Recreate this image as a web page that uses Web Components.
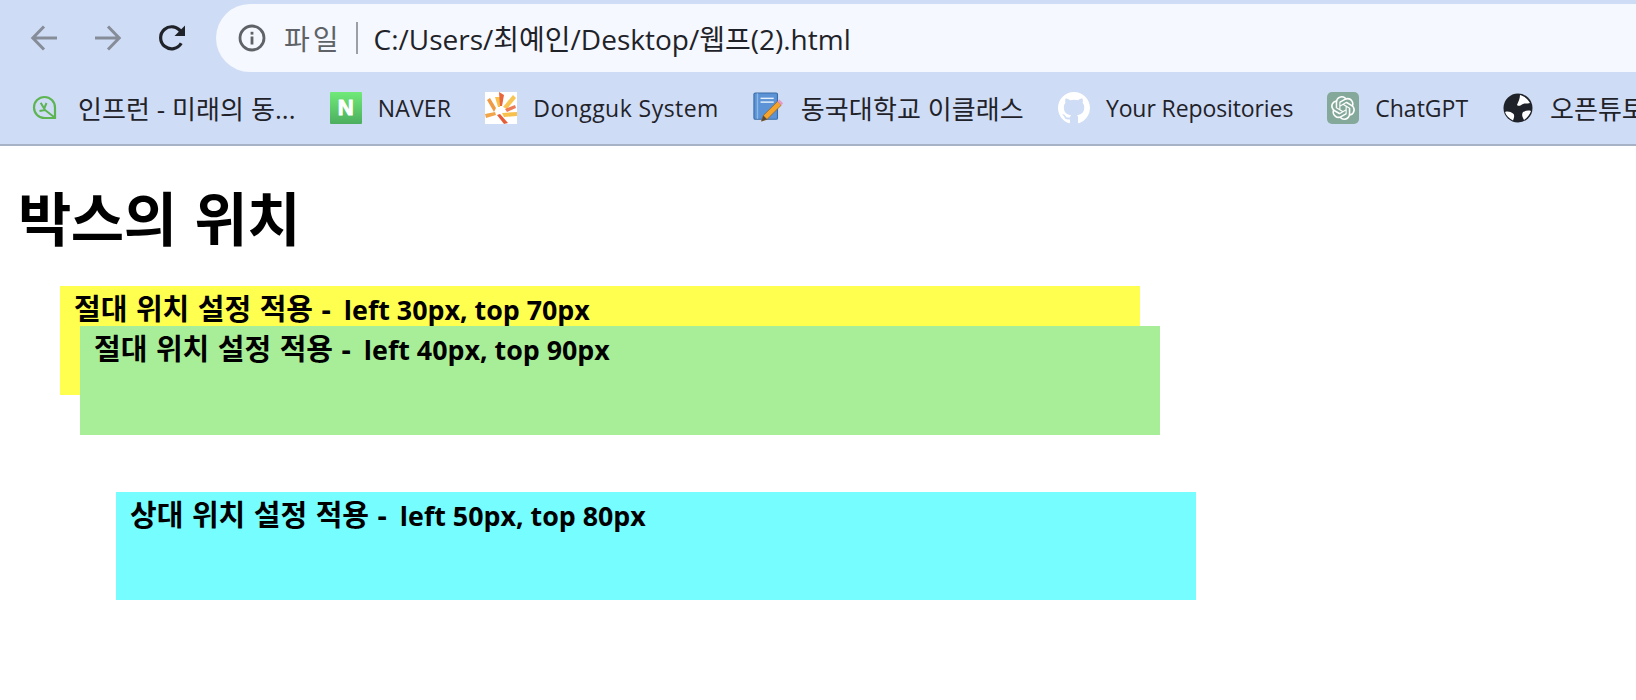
<!DOCTYPE html>
<html lang="ko">
<head>
<meta charset="utf-8">
<title>박스의 위치</title>
<style>
  html, body { margin: 0; padding: 0; background: #fff; overflow: hidden; }
  body { width: 1636px; height: 700px; font-family: "Noto Sans CJK KR", "Open Sans", sans-serif; }
</style>
</head>
<body>
<browser-chrome>
  <nav-button slot="nav" kind="back"></nav-button>
  <nav-button slot="nav" kind="forward"></nav-button>
  <nav-button slot="nav" kind="reload"></nav-button>
  <omni-box slot="nav" url="C:/Users/최예인/Desktop/웹프(2).html"></omni-box>

  <bookmark-item slot="bookmarks" icon="leaf" lang="ko" track="0.08" label="인프런 - 미래의 동..."></bookmark-item>
  <bookmark-item slot="bookmarks" icon="naver" track="0.2" label="NAVER"></bookmark-item>
  <bookmark-item slot="bookmarks" icon="dongguk" track="0.45" label="Dongguk System"></bookmark-item>
  <bookmark-item slot="bookmarks" icon="book" lang="ko" track="0.1" label="동국대학교 이클래스"></bookmark-item>
  <bookmark-item slot="bookmarks" icon="github" track="-0.1" label="Your Repositories"></bookmark-item>
  <bookmark-item slot="bookmarks" icon="chatgpt" label="ChatGPT"></bookmark-item>
  <bookmark-item slot="bookmarks" icon="globe" lang="ko" label="오픈튜토"></bookmark-item>
</browser-chrome>

<demo-page>
  <h1 slot="title">박스의 위치</h1>
  <demo-box color="#ffff50" indent="60"><span>절대 위치 설정 적용 -</span> left 30px, top 70px</demo-box>
  <demo-box color="#a8ee98" indent="80" overlap="69"><span>절대 위치 설정 적용 -</span> left 40px, top 90px</demo-box>
  <demo-box color="#75fdff" indent="116" gap="57" height="108"><span>상대 위치 설정 적용 -</span> left 50px, top 80px</demo-box>
</demo-page>

<script>
const UI_FONT = `"Open Sans", "Noto Sans CJK KR", sans-serif`;

const NAV_ICONS = {
  back: `<path d="M27 14H3M14 2.5 2.8 14 14 25.5" fill="none" stroke="#868d99" stroke-width="3"/>`,
  forward: `<path d="M1 14h24M14 2.5 25.2 14 14 25.5" fill="none" stroke="#868d99" stroke-width="3"/>`,
  reload: `<path d="M23.2 19.2A11 11 0 1 1 23 8" fill="none" stroke="#1f2329" stroke-width="3.2"/><path d="M27 1.5V12H16.5z" fill="#1f2329"/>`,
};

const BOOKMARK_ICONS = {
  leaf: `<svg viewBox="0 0 32 32" width="32" height="32"><path d="M25 26H14.5A10.5 10.5 0 1 1 25 15.5z" fill="none" stroke="#5cb552" stroke-width="2.2"/><path d="M24 25 15 18M15 18 10.7 10.7M15 18 9.5 19M14 17 16.5 11" fill="none" stroke="#5cb552" stroke-width="2"/></svg>`,
  dongguk: `<svg viewBox="0 0 32 32" width="32" height="32"><rect width="32" height="32" fill="#fff"/><path d="M2 8l3-2 6 10-2 4z" fill="#ee9a47"/><path d="M0 22l10-2 1 3-10 3z" fill="#f2a548"/><path d="M10 5h5v10h-2z" fill="#f8c14d"/><path d="M14 0l5 3-2 11h-2z" fill="#e9653b"/><path d="M18 15 28 3l3 3-9 11z" fill="#f9c552"/><path d="M20 17l10-4 1 3-9 4z" fill="#e9653b" opacity=".85"/><path d="M17 21l15-1v4l-13 1z" fill="#f8c14d"/><path d="M12 23l3-1 8 9-4 1z" fill="#e55c38"/></svg>`,
  book: `<svg viewBox="0 0 34 34" width="32" height="32"><rect x="1" y="1" width="25" height="28" rx="1.5" fill="#5b93d6" stroke="#3a6ca8" stroke-width="1.2"/><rect x="4" y="1.5" width="1.5" height="27" fill="#8db7e6"/><rect x="8" y="6" width="14" height="1.5" fill="#e8f1fb"/><rect x="8" y="10" width="14" height="1.5" fill="#e8f1fb"/><path d="M9 31l2-6L26 10l4 4L15 29z" fill="#f4a32c" stroke="#8a5a1e" stroke-width=".7"/><path d="M26 10l2-2 4 4-2 2z" fill="#e59ac8"/><path d="M9 31l2-6 4 4z" fill="#5a4a3c"/></svg>`,
  github: `<svg viewBox="0 0 16 16" width="32" height="32"><path fill="#fff" d="M8 0C3.58 0 0 3.58 0 8c0 3.54 2.29 6.53 5.47 7.59.4.07.55-.17.55-.38 0-.19-.01-.82-.01-1.49-2.01.37-2.53-.49-2.69-.94-.09-.23-.48-.94-.82-1.13-.28-.15-.68-.52-.01-.53.63-.01 1.08.58 1.23.82.72 1.21 1.87.87 2.33.66.07-.52.28-.87.51-1.07-1.78-.2-3.64-.89-3.64-3.95 0-.87.31-1.59.82-2.15-.08-.2-.36-1.02.08-2.12 0 0 .67-.21 2.2.82.64-.18 1.32-.27 2-.27.68 0 1.36.09 2 .27 1.53-1.04 2.2-.82 2.2-.82.44 1.1.16 1.92.08 2.12.51.56.82 1.27.82 2.15 0 3.07-1.87 3.75-3.65 3.95.29.25.54.73.54 1.48 0 1.07-.01 1.93-.01 2.2 0 .21.15.46.55.38A8.013 8.013 0 0016 8c0-4.42-3.58-8-8-8z"/></svg>`,
  chatgpt: `<svg viewBox="0 0 32 32" width="32" height="32"><rect width="32" height="32" rx="5" fill="#84a99a"/><path transform="translate(4 4)" fill="#fff" d="M22.2819 9.8211a5.9847 5.9847 0 0 0-.5157-4.9108 6.0462 6.0462 0 0 0-6.5098-2.9A6.0651 6.0651 0 0 0 4.9807 4.1818a5.9847 5.9847 0 0 0-3.9977 2.9 6.0462 6.0462 0 0 0 .7427 7.0966 5.98 5.98 0 0 0 .511 4.9107 6.051 6.051 0 0 0 6.5146 2.9001A5.9847 5.9847 0 0 0 13.2599 24a6.0557 6.0557 0 0 0 5.7718-4.2058 5.9894 5.9894 0 0 0 3.9977-2.9001 6.0557 6.0557 0 0 0-.7475-7.0729zm-9.022 12.6081a4.4755 4.4755 0 0 1-2.8764-1.0408l.1419-.0804 4.7783-2.7582a.7948.7948 0 0 0 .3927-.6813v-6.7369l2.02 1.1686a.071.071 0 0 1 .038.052v5.5826a4.504 4.504 0 0 1-4.4945 4.4944zm-9.6607-4.1254a4.4708 4.4708 0 0 1-.5346-3.0137l.142.0852 4.783 2.7582a.7712.7712 0 0 0 .7806 0l5.8428-3.3685v2.3324a.0804.0804 0 0 1-.0332.0615L9.74 19.9502a4.4992 4.4992 0 0 1-6.1408-1.6464zM2.3408 7.8956a4.485 4.485 0 0 1 2.3655-1.9728V11.6a.7664.7664 0 0 0 .3879.6765l5.8144 3.3543-2.0201 1.1685a.0757.0757 0 0 1-.071 0l-4.8303-2.7865A4.504 4.504 0 0 1 2.3408 7.872zm16.5963 3.8558L13.1038 8.364 15.1192 7.2a.0757.0757 0 0 1 .071 0l4.8303 2.7913a4.4944 4.4944 0 0 1-.6765 8.1042v-5.6772a.79.79 0 0 0-.407-.667zm2.0107-3.0231l-.142-.0852-4.7735-2.7818a.7759.7759 0 0 0-.7854 0L9.409 9.2297V6.8974a.0662.0662 0 0 1 .0284-.0615l4.8303-2.7866a4.4992 4.4992 0 0 1 6.6802 4.66zM8.3065 12.863l-2.02-1.1638a.0804.0804 0 0 1-.038-.0567V6.0742a4.4992 4.4992 0 0 1 7.3757-3.4537l-.142.0805L8.704 5.459a.7948.7948 0 0 0-.3927.6813zm1.0976-2.3654l2.602-1.4998 2.6069 1.4998v2.9994l-2.5974 1.4997-2.6067-1.4997Z"/></svg>`,
  globe: `<svg viewBox="0 0 32 32" width="32" height="32"><circle cx="16" cy="16" r="14.5" fill="#1f2329"/><path d="M18 3c4 1 8 4 10 8-3 1-5 0-7 1s-4 3-6 1c1-3 3-6 3-10zM3 20c3-1 6 0 8 1.500s1 4 0 7c-4-2-7-5-8-8.500zM21 20c2-1 5-2 8-1-1 3-4 7-7 9-1-2-3-5-1-8z" fill="#fff"/></svg>`,
};

class BrowserChrome extends HTMLElement {
  constructor() {
    super();
    this.attachShadow({ mode: "open" });
    this.shadowRoot.innerHTML = `
    <style>
      :host { display: block; background: #cfdcf5; border-bottom: 2px solid #a7b2c7; height: 144px; overflow: hidden; }
      .nav { display: flex; align-items: center; height: 68px; padding: 4px 0 0 24px; }
      .bookmarks { display: flex; align-items: center; height: 32px; margin-top: 20px; padding-left: 30px; gap: 34px; white-space: nowrap; }
    </style>
    <div class="nav"><slot name="nav"></slot></div>
    <div class="bookmarks"><slot name="bookmarks"></slot></div>`;
  }
}

class NavButton extends HTMLElement {
  constructor() {
    super();
    this.attachShadow({ mode: "open" });
  }

  connectedCallback() {
    const kind = this.getAttribute("kind");
    this.shadowRoot.innerHTML = `
    <style>
      :host { display: flex; align-items: center; justify-content: center; width: 40px; height: 40px; margin-right: 24px; flex: none; }
      svg { display: block; }
    </style>
    <svg viewBox="0 0 28 28" width="28" height="28">${NAV_ICONS[kind]}</svg>`;
  }
}

class OmniBox extends HTMLElement {
  constructor() {
    super();
    this.attachShadow({ mode: "open" });
  }

  connectedCallback() {
    this.shadowRoot.innerHTML = `
    <style>
      :host { display: flex; align-items: center; flex: 1; height: 68px; padding-left: 22px; background: #f5f8fe; border-radius: 34px 0 0 34px; font: 28px ${UI_FONT}; color: #1f2329; }
      svg { flex: none; display: block; }
      .scheme { margin-left: 18px; color: #5f6368; letter-spacing: 3px; }
      .sep { width: 2px; height: 32px; margin: 0 16px 0 14px; background: #9aa0a6; }
      .url { white-space: nowrap; }
    </style>
    <svg viewBox="0 0 28 28" width="28" height="28"><circle cx="14" cy="14" r="12" fill="none" stroke="#5f6368" stroke-width="2.8"/><rect x="12.6" y="12.5" width="2.8" height="8" fill="#5f6368"/><rect x="12.6" y="7.8" width="2.8" height="2.8" fill="#5f6368"/></svg>
    <span class="scheme">파일</span><span class="sep"></span><span class="url">${this.getAttribute("url")}</span>`;
  }
}

class BookmarkItem extends HTMLElement {
  constructor() {
    super();
    this.attachShadow({ mode: "open" });
  }

  get iconMarkup() {
    const icon = this.getAttribute("icon");
    if (icon === "naver") return `<span class="naver">N</span>`;
    return BOOKMARK_ICONS[icon];
  }

  connectedCallback() {
    this.style.setProperty("--label-track", `${this.getAttribute("track") ?? 0}px`);
    this.shadowRoot.innerHTML = `
    <style>
      :host { display: flex; align-items: center; gap: 16px; flex: none; font: 23px ${UI_FONT}; color: #1f2329; letter-spacing: var(--label-track); }
      :host([lang="ko"]) { font-size: 26px; }
      svg { display: block; flex: none; }
      .naver { display: grid; place-content: center; width: 32px; height: 32px; flex: none; border-radius: 1px; background: linear-gradient(#70ea78, #4cae5f); color: #fff; font: 900 22px "Liberation Sans", sans-serif; -webkit-text-stroke: 1px #fff; }
    </style>
    ${this.iconMarkup}<span>${this.getAttribute("label")}</span>`;
  }
}

class DemoPage extends HTMLElement {
  constructor() {
    super();
    this.attachShadow({ mode: "open" });
    this.shadowRoot.innerHTML = `
    <style>
      :host { display: block; padding-left: 18px; color: #000; }
      ::slotted(h1) { margin: 36px 0 36px; font: 700 58px/68px "Noto Sans CJK KR", sans-serif; letter-spacing: -0.5px; word-spacing: 2px; }
      .boxes { margin-left: -18px; }
    </style>
    <slot name="title"></slot>
    <div class="boxes"><slot></slot></div>`;
  }
}

class DemoBox extends HTMLElement {
  constructor() {
    super();
    this.attachShadow({ mode: "open" });
  }

  connectedCallback() {
    const overlap = this.getAttribute("overlap") ?? 0;
    const gap = this.getAttribute("gap") ?? 0;
    this.style.setProperty("--box-color", this.getAttribute("color"));
    this.style.setProperty("--box-indent", `${this.getAttribute("indent")}px`);
    this.style.setProperty("--box-shift", `${gap - overlap}px`);
    this.style.setProperty("--box-height", `${this.getAttribute("height") ?? 109}px`);
    this.shadowRoot.innerHTML = `
    <style>
      :host { display: block; position: relative; box-sizing: border-box; width: 1080px; height: var(--box-height); margin: var(--box-shift) 0 0 var(--box-indent); padding: 3px 14px; background: var(--box-color); font: 700 26.8px/40px "Open Sans", "Noto Sans CJK KR", sans-serif; white-space: nowrap; }
      ::slotted(span) { font-size: 29px; word-spacing: 1px; margin-right: 6px; }
    </style>
    <slot></slot>`;
  }
}

customElements.define("browser-chrome", BrowserChrome);
customElements.define("nav-button", NavButton);
customElements.define("omni-box", OmniBox);
customElements.define("bookmark-item", BookmarkItem);
customElements.define("demo-page", DemoPage);
customElements.define("demo-box", DemoBox);
</script>
</body>
</html>
